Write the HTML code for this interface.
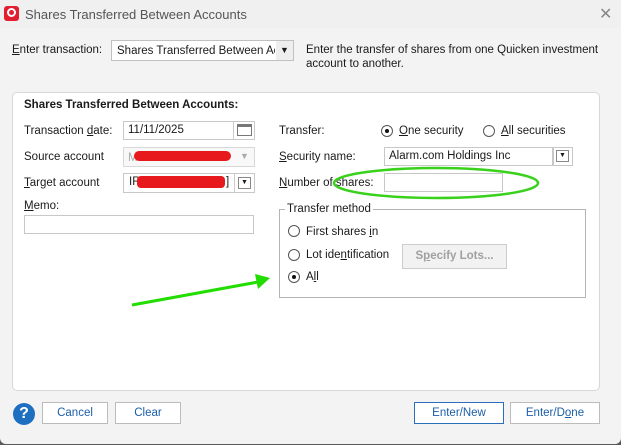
<!DOCTYPE html>
<html><head><style>
*{margin:0;padding:0;box-sizing:border-box}
body{width:621px;height:445px;background:#5a5a5a;font-family:"Liberation Sans",sans-serif;font-size:11.5px;color:#1a1a1a;position:relative;overflow:hidden}
.win{position:absolute;left:0;top:0;width:621px;height:444px;background:#f3f3f3;border-radius:0 0 6px 6px}
.a{position:absolute;white-space:nowrap}
.box{position:absolute;background:#fff;border:1px solid #c8c8c8}
.panel{position:absolute;left:12px;top:92px;width:588px;height:299px;background:#fff;border:1px solid #d8d8d8;border-radius:5px}
.btn{position:absolute;background:#fff;border:1px solid #bcbcbc;color:#1b5ea8;text-align:center;line-height:21px}
.rad{position:absolute;width:12px;height:12px;border:1px solid #555;border-radius:50%;background:#fff}
.rad.on::after{content:"";position:absolute;left:3px;top:3px;width:4px;height:4px;border-radius:50%;background:#111}
u{text-decoration:underline}
</style></head><body>
<div class="win">
<div class="a" style="left:0;top:0;width:621px;height:28px;background:#f0f0f0"></div>
<div class="a" style="left:4px;top:6px;width:15px;height:15px;background:#e02030;border-radius:3px"></div>
<div class="a" style="left:7px;top:8px;width:9px;height:9px;border:2px solid #fff;border-radius:50%"></div>
<div class="a" style="left:25px;top:7px;font-size:13px;color:#555">Shares Transferred Between Accounts</div>
<div class="a" style="left:599px;top:4px;font-size:16px;color:#888">✕</div>

<div class="a" style="left:12px;top:44px"><u>E</u>nter transaction:</div>
<div class="box" style="left:111px;top:40px;width:183px;height:21px;border-color:#c0c0c0;overflow:hidden"></div>
<div class="a" style="left:117px;top:45px;width:158px;overflow:hidden">Shares Transferred Between Ac</div>
<div class="a" style="left:276px;top:41px;width:17px;height:19px;background:#eee;font-size:9px;text-align:center;line-height:19px">▼</div>
<div class="a" style="left:306px;top:43px;line-height:14px">Enter the transfer of shares from one Quicken investment<br>account to another.</div>

<div class="panel"></div>
<div class="a" style="left:24px;top:99px;font-weight:bold">Shares Transferred Between Accounts:</div>

<div class="a" style="left:24px;top:125px">Transaction <u>d</u>ate:</div>
<div class="box" style="left:123px;top:121px;width:132px;height:19px"></div>
<div class="a" style="left:128px;top:124px">11/11/2025</div>
<div class="a" style="left:233px;top:122px;width:1px;height:17px;background:#ccc"></div>
<div class="a" style="left:237px;top:124px;width:15px;height:12px;border:1px solid #777;border-top:3px solid #777"></div>

<div class="a" style="left:24px;top:151px">Source account</div>
<div class="box" style="left:123px;top:147px;width:132px;height:20px;border-color:#d8d8d8;background:#f8f8f8"></div>
<div class="a" style="left:128px;top:152px;color:#aaa">M</div>
<div class="a" style="left:134px;top:151px;width:97px;height:10px;background:#e8191c;border-radius:5px"></div>
<div class="a" style="left:240px;top:151px;color:#aaa;font-size:9px">▼</div>

<div class="a" style="left:24px;top:177px"><u>T</u>arget account</div>
<div class="box" style="left:123px;top:173px;width:132px;height:20px"></div>
<div class="a" style="left:129px;top:176px">IR</div>
<div class="a" style="left:137px;top:176px;width:88px;height:12px;background:#e8191c;border-radius:4px"></div>
<div class="a" style="left:226px;top:176px">]</div>
<div class="a" style="left:234px;top:174px;width:1px;height:18px;background:#ccc"></div>
<div class="a" style="left:238px;top:177px;width:13px;height:12px;border:1px solid #888;font-size:7px;text-align:center;line-height:10px">▼</div>

<div class="a" style="left:24px;top:200px"><u>M</u>emo:</div>
<div class="box" style="left:24px;top:215px;width:230px;height:19px"></div>

<div class="a" style="left:279px;top:125px">Transfer:</div>
<div class="rad on" style="left:381px;top:125px"></div>
<div class="a" style="left:399px;top:125px"><u>O</u>ne security</div>
<div class="rad" style="left:483px;top:125px"></div>
<div class="a" style="left:501px;top:125px"><u>A</u>ll securities</div>

<div class="a" style="left:279px;top:151px"><u>S</u>ecurity name:</div>
<div class="box" style="left:384px;top:147px;width:169px;height:19px"></div>
<div class="a" style="left:389px;top:150px">Alarm.com Holdings Inc</div>
<div class="box" style="left:553px;top:147px;width:20px;height:19px"></div>
<div class="a" style="left:556px;top:150px;width:13px;height:12px;border:1px solid #888;font-size:7px;text-align:center;line-height:10px">▼</div>

<div class="a" style="left:279px;top:177px"><u>N</u>umber of shares:</div>
<div class="box" style="left:384px;top:173px;width:119px;height:19px"></div>

<div class="a" style="left:279px;top:209px;width:307px;height:89px;border:1px solid #b4b4b4"></div>
<div class="a" style="left:285px;top:203px;background:#fff;padding:0 2px">Transfer method</div>
<div class="rad" style="left:288px;top:225px"></div>
<div class="a" style="left:306px;top:226px">First shares <u>i</u>n</div>
<div class="rad" style="left:288px;top:249px"></div>
<div class="a" style="left:306px;top:249px">Lot ide<u>n</u>tification</div>
<div class="a" style="left:402px;top:244px;width:105px;height:25px;background:#f2f2f2;border:1px solid #ccc;color:#a0a0a0;text-align:center;line-height:23px;font-weight:bold">S<u>p</u>ecify Lots...</div>
<div class="rad on" style="left:288px;top:271px"></div>
<div class="a" style="left:306px;top:271px">A<u>l</u>l</div>

<div class="a" style="left:13px;top:403px;width:22px;height:22px;border-radius:50%;background:#1e6fc0;color:#fff;font-weight:bold;font-size:16px;text-align:center;line-height:22px">?</div>
<div class="btn" style="left:42px;top:402px;width:66px;height:22px">Cancel</div>
<div class="btn" style="left:115px;top:402px;width:66px;height:22px">Clear</div>
<div class="btn" style="left:414px;top:402px;width:90px;height:22px;border-color:#2b6fba">Enter/New</div>
<div class="btn" style="left:510px;top:402px;width:90px;height:22px">Enter/D<u>o</u>ne</div>

<svg class="a" style="left:0;top:0" width="621" height="445">
<ellipse cx="436" cy="183" rx="102" ry="15" fill="none" stroke="#3ad11c" stroke-width="2.5"/>
<line x1="132" y1="305" x2="258" y2="282" stroke="#22dd00" stroke-width="3"/>
<polygon points="270,278 255,274 258,289" fill="#22dd00"/>
</svg>
</div>
</body></html>
